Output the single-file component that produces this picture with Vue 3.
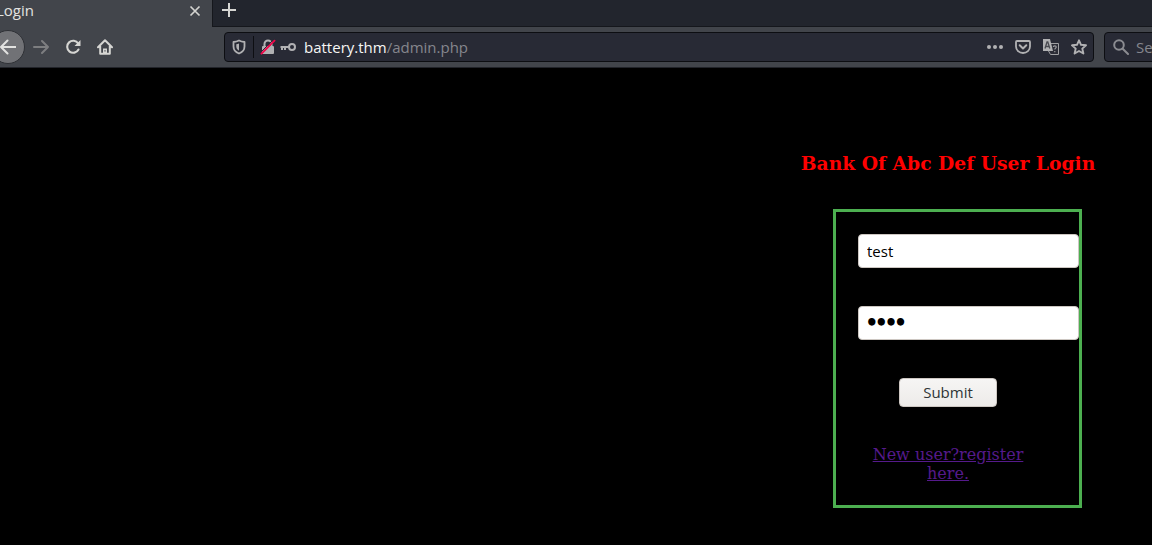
<script setup>
import { ref } from 'vue'

const username = ref('test')
const password = ref('test')
</script>

<template>
  <div class="window">
    <header class="chrome">
      <div class="tabs">
        <div class="tab">
          <span>Login</span>
          <button class="icon" type="button" aria-label="Close tab">
            <svg width="12" height="12" viewBox="0 0 12 12"><path d="M1.5 1.5l9 9M10.5 1.5l-9 9" stroke="#d3d3d0" stroke-width="1.7" fill="none" /></svg>
          </button>
        </div>
        <button class="icon new-tab" type="button" aria-label="New tab">
          <svg width="16" height="16" viewBox="0 0 16 16"><path d="M8 1v14M1 8h14" stroke="#d6d6d3" stroke-width="2" fill="none" /></svg>
        </button>
      </div>
      <nav class="toolbar">
        <button class="icon back" type="button" aria-label="Back">
          <svg width="16" height="16" viewBox="0 0 16 16"><path d="M15.500 8H1M7.500 1.500L1 8l6.500 6.500" stroke="#e2e2e0" stroke-width="2" fill="none" stroke-linecap="round" stroke-linejoin="round" /></svg>
        </button>
        <button class="icon" type="button" aria-label="Forward">
          <svg width="16" height="16" viewBox="0 0 16 16"><path d="M1 8h14M9 2l6 6-6 6" stroke="#7d7e80" stroke-width="2" fill="none" stroke-linecap="round" stroke-linejoin="round" /></svg>
        </button>
        <button class="icon" type="button" aria-label="Reload">
          <svg width="16" height="16" viewBox="0 0 16 16"><path d="M13.200 4.500A6 6 0 1 0 13.500 10.500" stroke="#d6d6d3" stroke-width="2.100" fill="none" stroke-linecap="round" /><path d="M15.500 1v6h-6z" fill="#d6d6d3" /></svg>
        </button>
        <button class="icon" type="button" aria-label="Home">
          <svg width="16" height="16" viewBox="0 0 16 16"><path d="M1 8.300L8 1.300l7 7M3.200 7v7.800h9.600V7" stroke="#d6d6d3" stroke-width="2" fill="none" stroke-linecap="round" stroke-linejoin="round" /><path d="M6 15V9.500h4V15z" fill="#d6d6d3" /><path d="M8 11.200v1.300" stroke="#42454b" stroke-width="1.200" /></svg>
        </button>
        <div class="address">
          <svg width="16" height="16" viewBox="0 0 16 16"><path d="M8 1.500C6 2.600 4.300 2.900 2.500 3v4.500c0 3.600 2.300 5.800 5.500 7 3.200-1.200 5.500-3.400 5.500-7V3C11.700 2.900 10 2.600 8 1.500z" fill="none" stroke="#b1b1b3" stroke-width="1.800" stroke-linejoin="round" /><path d="M8 4.500c-1 .5-1.800.7-2.700.8v2.300c0 2 1 3.200 2.700 4.100z" fill="#b1b1b3" /></svg>
          <span class="divider"></span>
          <svg width="16" height="16" viewBox="0 0 16 16"><path d="M4.500 8V5a3.500 3.500 0 0 1 7 0v3" fill="none" stroke="#b1b1b3" stroke-width="2" /><rect x="2" y="7" width="12" height="8" rx="1" fill="#b1b1b3" /><path d="M.5 13.500L13 1" stroke="#2a2b36" stroke-width="1" /><path d="M1.500 14.700L14.500 1.700" stroke="#f0064a" stroke-width="1.900" stroke-linecap="round" /></svg>
          <svg class="key" width="16" height="16" viewBox="0 0 16 16"><circle cx="12" cy="8" r="3" fill="none" stroke="#b1b1b3" stroke-width="2" /><path d="M9 8H.5M2 8v3M5 8v3" stroke="#b1b1b3" stroke-width="2" fill="none" /></svg>
          <span class="url"><b>battery.thm</b>/admin.php</span>
          <button class="icon" type="button" aria-label="Page actions">
            <svg width="16" height="16" viewBox="0 0 16 16"><g fill="#b1b1b3"><circle cx="2" cy="8" r="2" /><circle cx="8" cy="8" r="2" /><circle cx="14" cy="8" r="2" /></g></svg>
          </button>
          <button class="icon" type="button" aria-label="Save to Pocket">
            <svg width="16" height="16" viewBox="0 0 16 16"><path d="M2 2h12a1 1 0 0 1 1 1v4.500a7 6.500 0 0 1-14 0V3a1 1 0 0 1 1-1z" fill="none" stroke="#b1b1b3" stroke-width="1.800" /><path d="M4.700 6.300L8 9.500l3.300-3.200" fill="none" stroke="#b1b1b3" stroke-width="2" stroke-linecap="round" stroke-linejoin="round" /></svg>
          </button>
          <button class="icon" type="button" aria-label="Translate page">
            <svg width="16" height="16" viewBox="0 0 16 16"><path d="M8 4.500h7.500v11H7.500l-2-3.500" fill="#2c2d37" stroke="#a0a0a3" stroke-width="1" /><path d="M0 0h7l3 12H0z" fill="#b1b1b3" /><path d="M2 9.500l2-6.500h.8l2 6.500M2.800 7.500H6" stroke="#4a4b52" stroke-width="1.300" fill="none" /><path d="M10.300 8c0-1.500 3-1.500 3 0 0 1-1.500 1-1.500 2.500M11.800 12v1.200" stroke="#a0a0a3" stroke-width="1.100" fill="none" /></svg>
          </button>
          <button class="icon" type="button" aria-label="Bookmark">
            <svg width="16" height="16" viewBox="0 0 16 16"><path d="M8 1.300l2 4.500 5 .5-3.700 3.300 1.100 4.900L8 12l-4.400 2.500 1.100-4.900L1 6.300l5-.5z" fill="none" stroke="#b1b1b3" stroke-width="1.900" stroke-linejoin="round" /></svg>
          </button>
        </div>
        <div class="search">
          <svg width="16" height="16" viewBox="0 0 16 16"><circle cx="6" cy="6" r="4.800" fill="none" stroke="#8b8c91" stroke-width="2" /><path d="M9.700 9.700L15 15" stroke="#8b8c91" stroke-width="2" stroke-linecap="round" /></svg>
          <span>Se</span>
        </div>
      </nav>
    </header>

    <main class="login">
      <h3>Bank Of Abc Def User Login</h3>
      <form class="panel" @submit.prevent>
        <input v-model="username" type="text" aria-label="Username" />
        <input v-model="password" class="secret" type="password" aria-label="Password" />
        <button class="submit" type="submit">Submit</button>
        <a href="#">New user?register here.</a>
      </form>
    </main>
  </div>
</template>

<style>
body {
  background: #000;
  overflow: hidden;
}
</style>

<style scoped>
.window {
  font-family: "Open Sans", "Noto Sans", sans-serif;
  font-size: 15px;
  line-height: 20px;
}

.chrome {
  background: #42454b;
  border-bottom: 1px solid #22242a;
  overflow: hidden;
}

.icon {
  display: flex;
  align-items: center;
  justify-content: center;
  flex: none;
  padding: 0;
  border: 0;
  background: none;
}

svg {
  display: block;
  flex: none;
}

.tabs {
  display: flex;
  height: 27px;
  background: #22252d;
  box-shadow: inset 0 -1px #15171c;
}

.tab {
  box-sizing: border-box;
  display: flex;
  align-items: flex-start;
  justify-content: space-between;
  width: 217px;
  margin-left: -4px;
  padding-right: 11px;
  background: #42454b;
  border-right: 1px solid #15171c;
  color: #e3e3e0;
}

.tab .icon {
  height: 22px;
}

.new-tab {
  width: 32px;
  height: 20px;
}

.toolbar {
  display: flex;
  align-items: center;
  gap: 16px;
  height: 40px;
  margin-left: -9px;
}

.back {
  box-sizing: border-box;
  width: 34px;
  height: 34px;
  margin-right: -8px;
  border: 1px solid #2f3136;
  border-radius: 50%;
  background: #717276;
}

.address,
.search {
  box-sizing: border-box;
  display: flex;
  align-items: center;
  height: 30px;
  border: 1px solid #0d0e12;
  border-radius: 4px;
  background: #282a35;
}

.address {
  flex: 1;
  gap: 12px;
  min-width: 0;
  margin-left: 95px;
  padding: 0 6px;
}

.divider {
  width: 1px;
  height: 22px;
  margin: 0 -6px;
  background: #0d0e12;
}

.key {
  margin-left: -8px;
}

.url {
  flex: 1;
  min-width: 0;
  margin-left: -4px;
  color: #85868d;
}

.url b {
  color: #f6f6f4;
  font-weight: 400;
}

.search {
  gap: 7px;
  width: 60px;
  margin: 0 -12px 0 -6px;
  padding-left: 8px;
  color: #85868d;
}

.login {
  width: 296px;
  margin: 84px 56px 0 auto;
  font-family: "DejaVu Serif", serif;
  font-size: 16px;
  line-height: 19px;
}

h3 {
  margin: 0 0 35px;
  color: #f00;
  line-height: 22px;
  text-align: center;
  white-space: nowrap;
}

.panel {
  box-sizing: border-box;
  display: flex;
  flex-direction: column;
  gap: 38px;
  width: 249px;
  margin-left: 33px;
  padding: 22px 0 22px 22px;
  border: 3px solid #4caf50;
}

input {
  box-sizing: border-box;
  width: 100%;
  height: 34px;
  padding: 0 8px;
  border: 1px solid #cdc7c2;
  border-radius: 4px;
  background: #fff;
  color: #000;
  font: 15px "Open Sans", "Noto Sans", sans-serif;
}

.secret {
  font: bold 15px "DejaVu Sans", sans-serif;
  -webkit-text-stroke: 2px #000;
}

.submit {
  width: 98px;
  height: 29px;
  margin-left: 41px;
  padding: 0 0 2px;
  border: 1px solid #cdc7c2;
  border-radius: 4px;
  background: linear-gradient(#f6f5f4, #edebe9);
  color: #2e3436;
  font: 15px "Open Sans", "Noto Sans", sans-serif;
}

a {
  width: 180px;
  color: #551a8b;
  text-align: center;
}
</style>
